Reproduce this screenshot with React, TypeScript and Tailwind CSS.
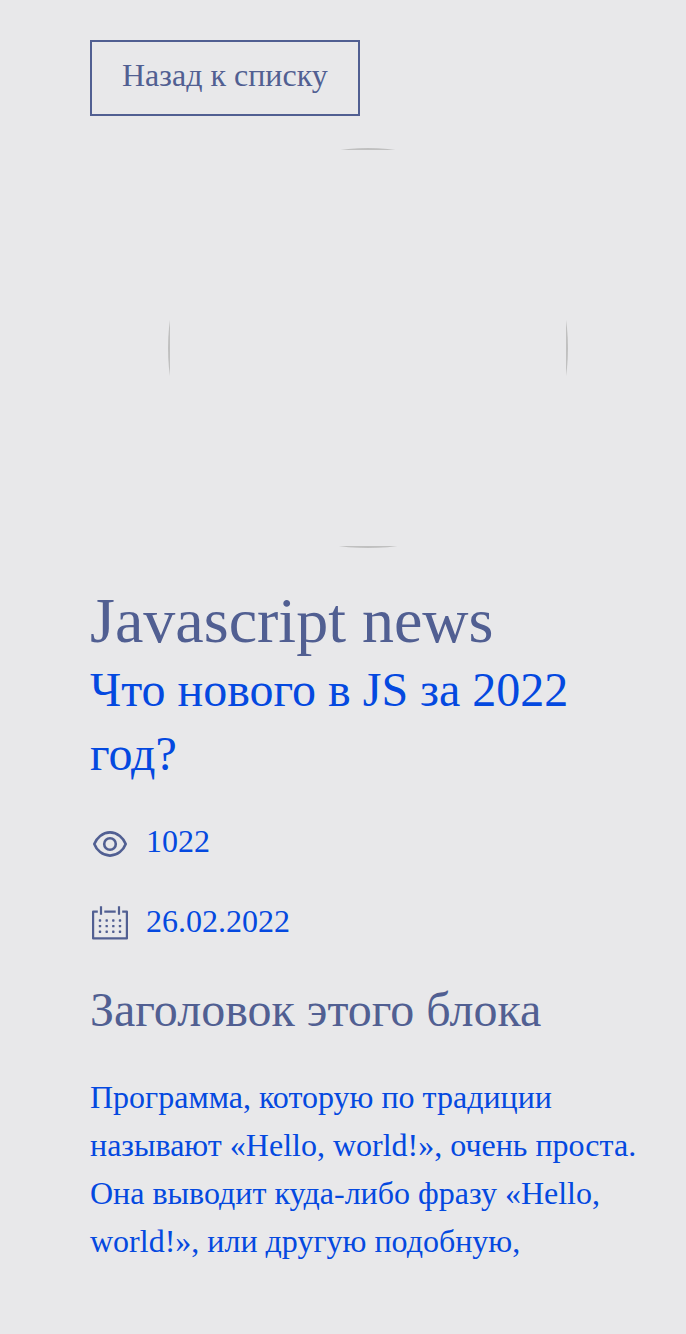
const dotColumns = [10, 16.7, 23.3, 30];
const dotRows = [16.5, 22.1, 27.7];

function EyeIcon() {
  return (
    <svg className="mt-[7px] size-10" viewBox="0 0 40 40" fill="none" stroke="#515f92" strokeWidth="2.6" strokeLinejoin="round">
      <path d="M4.3 20C6.5 14 12.5 8.4 20 8.4S33.5 14 35.7 20C33.5 26 27.5 31.6 20 31.6S6.5 26 4.3 20Z" />
      <circle cx="20" cy="20" r="5.8" />
    </svg>
  );
}

function CalendarIcon() {
  return (
    <svg className="mt-[7px] size-10" viewBox="0 0 40 40" fill="none" stroke="#515f92" strokeWidth="2.2" strokeLinejoin="round">
      <path d="M7.8 7.7H3.1V34.4H36.9V7.7H32.2M14.3 7.7H25.7M11 2.2V10.8M29 2.2V10.8" />
      <g fill="#515f92" stroke="none">
        {dotRows.map((y) => dotColumns.map((x) => (
          <rect key={`${x}-${y}`} x={x - 1.2} y={y - 1.2} width="2.4" height="2.4" rx="0.6" />
        )))}
      </g>
    </svg>
  );
}

export default function App() {
  return (
    <main className="flex h-[1334px] w-[686px] flex-col items-start overflow-hidden bg-[#e8e8ea] pt-10 pl-[90px] font-['Liberation_Serif',serif] text-[32px] leading-[48px] text-[#0449e0]">
      <button className="h-[76px] w-[270px] border-2 border-[#515f92] pb-1.5 text-left pl-[30px] text-[32px] leading-[48px] text-[#515f92]">
        Назад к списку
      </button>
      <div className="mt-8 ml-[78px] size-[400px] shrink-0 overflow-hidden rounded-full">
        <div className="size-full border-2 border-[#c0c0c0]" />
      </div>
      <h1 className="mt-8 text-[64px] leading-[82px] text-[#515f92]">Javascript news</h1>
      <h2 className="-mt-1 w-[556px] text-[48px] leading-[64px]">Что нового в JS за 2022 год?</h2>
      <div className="mt-[31px] flex h-12 items-start gap-4">
        <EyeIcon />
        <span>1022</span>
      </div>
      <div className="mt-8 flex h-12 items-start gap-4">
        <CalendarIcon />
        <span>26.02.2022</span>
      </div>
      <h3 className="mt-[33px] text-[48px] leading-[64px] text-[#515f92]">Заголовок этого блока</h3>
      <p className="mt-[31px] w-[556px]">
        Программа, которую по традиции называют «Hello, world!», очень проста. Она выводит куда-либо фразу «Hello, world!», или другую подобную,
      </p>
    </main>
  );
}
